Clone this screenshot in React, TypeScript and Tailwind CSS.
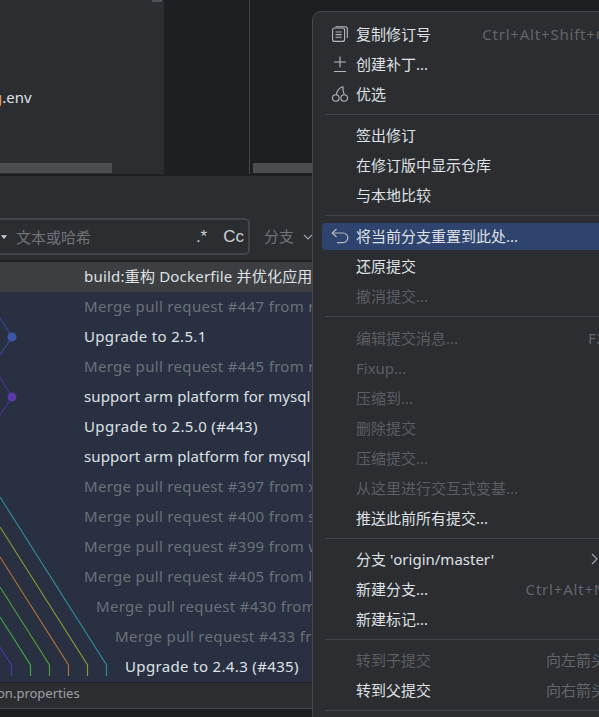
const sans = "font-['Noto_Sans','Noto_Sans_CJK_SC',sans-serif]";

type Row = { text: string; dim?: boolean; indent?: string; track: string };

const rows: Row[] = [
  { text: 'build:重构 Dockerfile 并优化应用', track: 'tracking-[0.2px]' },
  { text: 'Merge pull request #447 from release', dim: true, track: 'tracking-[0.32px]' },
  { text: 'Upgrade to 2.5.1', track: 'tracking-[0.32px]' },
  { text: 'Merge pull request #445 from release', dim: true, track: 'tracking-[0.32px]' },
  { text: 'support arm platform for mysql image', track: 'tracking-[0.1px]' },
  { text: 'Upgrade to 2.5.0 (#443)', track: 'tracking-[0.35px]' },
  { text: 'support arm platform for mysql image', track: 'tracking-[0.1px]' },
  { text: 'Merge pull request #397 from xiaoyu', dim: true, track: 'tracking-[0.32px]' },
  { text: 'Merge pull request #400 from sunny', dim: true, track: 'tracking-[0.32px]' },
  { text: 'Merge pull request #399 from wang', dim: true, track: 'tracking-[0.32px]' },
  { text: 'Merge pull request #405 from lee', dim: true, track: 'tracking-[0.32px]' },
  { text: 'Merge pull request #430 from dev', dim: true, indent: 'pl-[96px]', track: 'tracking-[0.32px]' },
  { text: 'Merge pull request #433 from dev', dim: true, indent: 'pl-[115px]', track: 'tracking-[0.32px]' },
  { text: 'Upgrade to 2.4.3 (#435)', indent: 'pl-[125px]', track: 'tracking-[0.35px]' },
];

type Item =
  | { sep: true; tall?: boolean }
  | { label: string; off?: boolean; hint?: string; latin?: boolean; icon?: React.ReactNode; active?: boolean; sub?: boolean; sep?: false };

function CopyIcon() {
  return (
    <svg width="16" height="16" viewBox="0 0 16 16" fill="none" stroke="#b4b8bf" strokeWidth="1.1">
      <rect x="0.6" y="2" width="12" height="13.4" rx="2" />
      <path d="M3.5 0.7h9.5a2.3 2.3 0 0 1 2.3 2.3v9" />
      <path d="M3.6 6h6M3.6 8.6h6M3.6 11.2h6" />
    </svg>
  );
}

function PatchIcon() {
  return (
    <svg width="16" height="17" viewBox="0 0 16 17" fill="none" stroke="#b4b8bf" strokeWidth="1.1">
      <path d="M8 0.5v11M2 6h12M2 15.500h12" />
    </svg>
  );
}

function CherryIcon() {
  return (
    <svg width="16" height="16" viewBox="0 0 16 16" fill="none" stroke="#b4b8bf" strokeWidth="1.1">
      <circle cx="3.8" cy="12" r="3.300" />
      <circle cx="12.200" cy="12" r="3.300" />
      <path d="M4.400 8.700C4.800 5 7.500 2 11 0.600" />
      <path d="M11 0.600C10.600 3.500 11.200 6 12.200 8.700" />
    </svg>
  );
}

function ResetIcon() {
  return (
    <svg width="18" height="16" viewBox="0 0 18 16" fill="none" stroke="#b4b8bf" strokeWidth="1.2">
      <path d="M5.500 1 1.200 5l4.300 4" />
      <path d="M1.500 5h10.500a4.800 4.800 0 0 1 0 9.600H6" />
    </svg>
  );
}

const menu: Item[] = [
  { label: '复制修订号', hint: 'Ctrl+Alt+Shift+C', latin: true, icon: <CopyIcon /> },
  { label: '创建补丁...', icon: <PatchIcon /> },
  { label: '优选', icon: <CherryIcon /> },
  { sep: true },
  { label: '签出修订' },
  { label: '在修订版中显示仓库' },
  { label: '与本地比较' },
  { sep: true },
  { label: '将当前分支重置到此处...', icon: <ResetIcon />, active: true },
  { label: '还原提交' },
  { label: '撤消提交...', off: true },
  { sep: true, tall: true },
  { label: '编辑提交消息...', off: true, hint: 'F2', latin: true },
  { label: 'Fixup...', off: true },
  { label: '压缩到...', off: true },
  { label: '删除提交', off: true },
  { label: '压缩提交...', off: true },
  { label: '从这里进行交互式变基...', off: true },
  { label: '推送此前所有提交...' },
  { sep: true },
  { label: "分支 'origin/master'", sub: true },
  { label: '新建分支...', hint: 'Ctrl+Alt+N', latin: true },
  { label: '新建标记...' },
  { sep: true },
  { label: '转到子提交', off: true, hint: '向左箭头' },
  { label: '转到父提交', hint: '向右箭头' },
  { sep: true },
];

function Graph() {
  const lines = [
    { d: 'M0 497 L106.500 665 V676', c: '#2f8795' },
    { d: 'M0 527 L87.500 665 V676', c: '#7c9a32' },
    { d: 'M0 557 L68.500 665 V676', c: '#a8703a' },
    { d: 'M0 587 L49.500 665 V676', c: '#4f9a35' },
    { d: 'M0 617 L30.500 665 V676', c: '#3fa53f' },
    { d: 'M0 647 L11.500 665 V676', c: '#3b3fa0' },
  ];
  return (
    <svg className="absolute left-0 top-0" width="130" height="414" viewBox="0 262 130 414" fill="none">
      {lines.map((l) => (
        <path key={l.c} d={l.d} stroke={l.c} strokeWidth="1.200" />
      ))}
      <path d="M0 318 L12 337 L0 355" stroke="#34498f" strokeWidth="1.200" />
      <circle cx="12" cy="337" r="4.500" fill="#3c56a8" />
      <path d="M0 377 L12 397 L0 415" stroke="#4a3292" strokeWidth="1.200" />
      <circle cx="12" cy="397" r="4.500" fill="#5a3aa6" />
    </svg>
  );
}

export default function App() {
  return (
    <div className={`relative w-[599px] h-[717px] overflow-hidden bg-[#1e1f22] text-[15px] ${sans}`}>
      <div className="flex h-[174px]">
        <div className="relative w-[164px] flex flex-col bg-[#2b2d30]">
          <div className="flex h-[2px] justify-end pr-[2px]">
            <div className="w-[10px] bg-[#4e5157]" />
          </div>
          <div className="flex-1 pt-[84px] whitespace-nowrap">
            <span className="-ml-[7px] text-[#d8a657]">g</span>
            <span className="text-[#dfe1e5]">.env</span>
          </div>
          <div className="h-[10px] w-[112px] mb-[1px] bg-[#4b4d50]" />
        </div>
        <div className="w-[86px] bg-[#1e1f22] border-r border-[#43454a]" />
        <div className="flex-1 flex flex-col justify-end pl-[3px] pb-[1px]">
          <div className="h-[10px] bg-[#4b4d50]" />
        </div>
      </div>
      <div className="h-[2px] bg-[#1e1f22]" />
      <div className="h-[84px] bg-[#2b2d30] flex items-end pb-[5px]">
        <div className="w-[258px] h-[37px] -ml-[8px] shrink-0 pr-[4px] flex items-center border-2 border-[#43454a] rounded-[5px]">
          <svg width="6" height="4" viewBox="0 0 8 5" className="ml-[7px]">
            <path d="M0 0h8L4 5z" fill="#ced0d6" />
          </svg>
          <span className="ml-[9px] pt-[2px] text-[#6f737a]">文本或哈希</span>
          <span className="ml-auto text-[#ced0d6] font-['Liberation_Sans',sans-serif] text-[17px] pt-[1px]">.*</span>
          <span className="ml-[16px] text-[#ced0d6] font-['Liberation_Sans',sans-serif] text-[17px]">Cc</span>
        </div>
        <div className="h-[37px] ml-[14px] flex items-center text-[#6f737a]">
          <span>分支</span>
          <svg width="10" height="6" viewBox="0 0 10 6" fill="none" className="ml-[9px]">
            <path d="M1 1l4 4 4-4" stroke="#9da0a8" strokeWidth="1.200" />
          </svg>
        </div>
      </div>
      <div className="h-[2px] bg-[#1e1f22]" />
      <div className="relative bg-[#283042]">
        {rows.map((r, i) => (
          <div
            key={i}
            className={`h-[30px] pb-[2px] flex items-center whitespace-nowrap overflow-hidden ${r.track} ${r.indent ?? 'pl-[84px]'} ${
              i === 0 ? 'bg-[#3c3e41]' : ''
            } ${r.dim ? 'text-[#6c7078]' : 'text-[#dfe1e5]'}`}
          >
            {r.text}
          </div>
        ))}
        <Graph />
      </div>
      <div className="h-[26px] pb-[4px] bg-[#2b2d30] border-t border-[#1e1f22] flex items-center text-[13px] text-[#9da0a8]">
        <span className="-ml-[3px]">on.properties</span>
      </div>
      <div className="h-[1px] bg-[#43454a]" />

      <div className="absolute left-[312px] top-[11px] w-[310px] pt-[7px] pb-[8px] bg-[#2b2d30] border border-[#43454a] rounded-[9px] z-10">
        {menu.map((m, i) =>
          m.sep ? (
            <div key={i} className={`${m.tall ? 'h-[12px] pb-[1px]' : 'h-[11px]'} flex items-center pl-[12px]`}>
              <div className="h-[1px] w-full bg-[#43454a]" />
            </div>
          ) : (
            <div key={i} className="h-[30px] flex items-center pl-[9px]">
              <div
                className={`h-[27px] flex-1 flex items-center rounded-[4px] pr-[15px] ${
                  m.active ? 'bg-[#2e436e]' : ''
                } ${m.off ? 'text-[#5a5d63]' : 'text-[#dfe1e5]'}`}
              >
                <span className="w-[34px] shrink-0 flex justify-center pl-[2px]">{m.icon}</span>
                <span className="whitespace-nowrap">{m.label}</span>
                {m.hint && (
                  <span className={`ml-auto whitespace-nowrap text-[#62656c] ${m.latin ? 'tracking-[0.8px]' : ''}`}>
                    {m.hint}
                  </span>
                )}
                {m.sub && (
                  <svg width="7" height="12" viewBox="0 0 7 12" fill="none" className="ml-auto mr-[8px]">
                    <path d="M1 1l5 5-5 5" stroke="#9da0a8" strokeWidth="1.200" />
                  </svg>
                )}
              </div>
            </div>
          )
        )}
      </div>
    </div>
  );
}
